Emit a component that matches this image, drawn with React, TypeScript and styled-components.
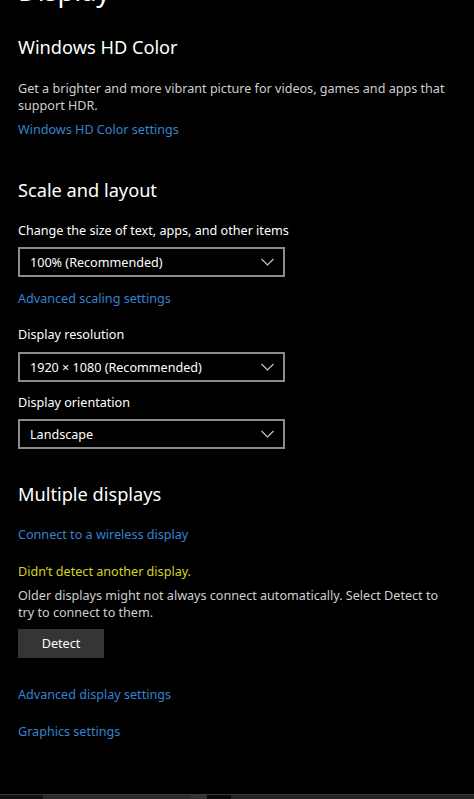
import styled, { createGlobalStyle } from 'styled-components'

const GlobalStyle = createGlobalStyle`
  html, body {
    margin: 0;
    padding: 0;
    background: #000;
  }
  body {
    font-family: 'Noto Sans', 'Open Sans', sans-serif;
    color: #fff;
    overflow: hidden;
  }
`

type GapProps = {
  $gap?: number
}

const Screen = styled.div`
  height: 799px;
  display: flex;
  flex-direction: column;
  background: #000;
`

const Content = styled.main`
  flex: 1;
  display: flex;
  flex-direction: column;
  align-items: flex-start;
  padding-left: 18px;
`

const PageTitle = styled.h1`
  margin: -27px 0 0;
  font-size: 27px;
  line-height: 36px;
  font-weight: 400;
  color: #fff;
`

const SectionTitle = styled.h2<GapProps>`
  margin: ${({ $gap }) => $gap ?? 0}px 0 0;
  font-size: 18.2px;
  line-height: 28px;
  font-weight: 400;
  color: #fff;
`

const Description = styled.p<GapProps>`
  margin: ${({ $gap }) => $gap ?? 0}px 0 0;
  width: 430px;
  font-size: 12.6px;
  line-height: 17px;
  color: #cfcfcf;
`

const Notice = styled.p<GapProps>`
  margin: ${({ $gap }) => $gap ?? 0}px 0 0;
  font-size: 12.6px;
  line-height: 20px;
  color: #d6d321;
`

const Label = styled.div<GapProps>`
  margin-top: ${({ $gap }) => $gap ?? 0}px;
  font-size: 12.6px;
  line-height: 20px;
  color: #fff;
`

const TextLink = styled.a<GapProps>`
  margin-top: ${({ $gap }) => $gap ?? 0}px;
  font-size: 12.6px;
  line-height: 20px;
  color: #3683cf;
  text-decoration: none;
  cursor: pointer;
`

const SelectBox = styled.div<GapProps>`
  margin-top: ${({ $gap }) => $gap ?? 0}px;
  box-sizing: border-box;
  width: 267px;
  height: 30px;
  padding: 0 9px 0 10px;
  display: flex;
  align-items: center;
  justify-content: space-between;
  border: 2px solid #8c8c8c;
  font-size: 12.6px;
  color: #fff;
`

const Chevron = styled.svg`
  width: 13px;
  height: 8px;
`

const Button = styled.button<GapProps>`
  margin-top: ${({ $gap }) => $gap ?? 0}px;
  width: 86px;
  height: 29px;
  border: none;
  background: #353535;
  color: #fff;
  font-family: inherit;
  font-size: 12.6px;
`

const Taskbar = styled.div`
  height: 4px;
  display: flex;
  border-top: 1px solid #3a3a3a;
  background: #262626;
`

type SegmentProps = {
  $width: number
  $tone: string
}

const Segment = styled.div<SegmentProps>`
  width: ${({ $width }) => $width}px;
  background: ${({ $tone }) => $tone};
`

type DropdownProps = {
  value: string
  gap?: number
}

const Dropdown: React.FC<DropdownProps> = ({ value, gap }) => {
  return (
    <SelectBox $gap={gap}>
      <span>{value}</span>
      <Chevron viewBox="0 0 13 8">
        <path d="M0.5 1 L6.5 7 L12.5 1" fill="none" stroke="#c8c8c8" strokeWidth="1.1" />
      </Chevron>
    </SelectBox>
  )
}

export default function App() {
  return (
    <Screen>
      <GlobalStyle />
      <Content>
        <PageTitle>Display</PageTitle>

        <SectionTitle $gap={24}>Windows HD Color</SectionTitle>
        <Description $gap={19}>
          Get a brighter and more vibrant picture for videos, games and apps that
          support HDR.
        </Description>
        <TextLink $gap={6}>Windows HD Color settings</TextLink>

        <SectionTitle $gap={36}>Scale and layout</SectionTitle>
        <Label $gap={17}>Change the size of text, apps, and other items</Label>
        <Dropdown gap={6} value="100% (Recommended)" />
        <TextLink $gap={12}>Advanced scaling settings</TextLink>
        <Label $gap={16}>Display resolution</Label>
        <Dropdown gap={7} value="1920 × 1080 (Recommended)" />
        <Label $gap={11}>Display orientation</Label>
        <Dropdown gap={6} value="Landscape" />

        <SectionTitle $gap={31}>Multiple displays</SectionTitle>
        <TextLink $gap={17}>Connect to a wireless display</TextLink>
        <Notice $gap={17}>Didn’t detect another display.</Notice>
        <Description $gap={5}>
          Older displays might not always connect automatically. Select Detect to
          try to connect to them.
        </Description>
        <Button $gap={8}>Detect</Button>

        <TextLink $gap={27}>Advanced display settings</TextLink>
        <TextLink $gap={17}>Graphics settings</TextLink>
      </Content>
      <Taskbar>
        <Segment $width={43} $tone="#111" />
        <Segment $width={148} $tone="#2a2a2a" />
        <Segment $width={16} $tone="#333" />
        <Segment $width={24} $tone="#0a0a0a" />
        <Segment $width={243} $tone="#262626" />
      </Taskbar>
    </Screen>
  )
}
